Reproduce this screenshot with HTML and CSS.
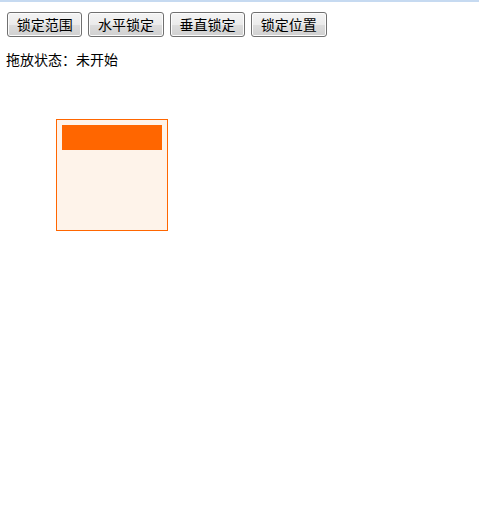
FILE: index.html
```html
<!DOCTYPE html>
<html>
<head>
<meta charset="utf-8">
<link rel="stylesheet" href="styles.css">
</head>
<body>
<div class="topline"></div>
<div class="toolbar">
  <button class="btn">锁定范围</button>
  <button class="btn">水平锁定</button>
  <button class="btn">垂直锁定</button>
  <button class="btn">锁定位置</button>
</div>
<div class="status">拖放状态：未开始</div>
<div class="box">
  <div class="handle"></div>
</div>
</body>
</html>
```
FILE: styles.css
```css
html, body {
  margin: 0;
  padding: 0;
  background: #ffffff;
  font-family: "Microsoft YaHei", "Noto Sans CJK SC", sans-serif;
  color: #000;
}
.topline {
  height: 2px;
  background: #c6daf1;
}
.toolbar {
  display: flex;
  gap: 6px;
  padding: 10px 0 0 7px;
}
.btn {
  box-sizing: border-box;
  width: 75.4px;
  height: 25px;
  padding: 0;
  margin: 0;
  border: 1px solid #707070;
  border-radius: 3px;
  background: linear-gradient(#f4f4f4 0%, #ebebeb 50%, #dddddd 51%, #d0d0d0 100%);
  font-family: "Microsoft YaHei", "Noto Sans CJK SC", sans-serif;
  font-size: 14px;
  line-height: 23px;
  color: #000;
  box-shadow: inset 0 0 0 1px #fcfcfc;
}
.status {
  margin: 12px 0 0 6px;
  font-size: 14px;
  line-height: 20px;
  height: 20px;
}
.box {
  box-sizing: border-box;
  width: 112px;
  height: 112px;
  margin: 50px 0 0 56px;
  border: 1px solid #ff6600;
  background: #fef3ea;
  padding: 5px;
}
.handle {
  width: 100px;
  height: 25px;
  background: #ff6600;
}
```
